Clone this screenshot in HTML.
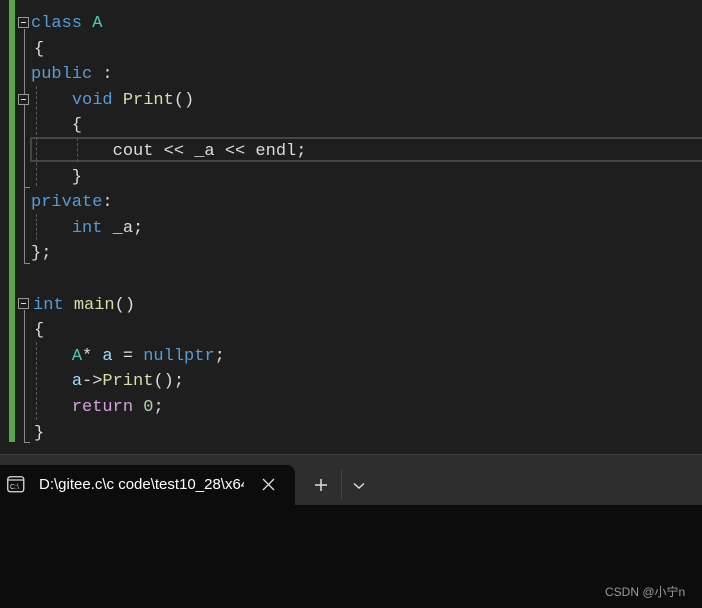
<!DOCTYPE html>
<html><head><meta charset="utf-8"><style>
*{margin:0;padding:0;box-sizing:border-box}
body{width:702px;height:608px;background:#0c0c0c;position:relative;overflow:hidden;font-family:"Liberation Mono",monospace}
#ed{position:absolute;left:0;top:0;width:702px;height:454px;background:#1e1e1e}
.gb{position:absolute;left:9px;width:6px;background:#57a64a}
.ln{position:absolute;left:31px;height:25.6px;line-height:25.6px;font-size:17px;color:#dcdcdc;white-space:pre}
.k{color:#569cd6}.t{color:#4ec9b0}.f{color:#dcdcaa}.v{color:#9cdcfe}.r{color:#d8a0df}.n{color:#b5cea8}
.box{position:absolute;left:18px;width:11px;height:11px;border:1px solid #999;background:#1e1e1e}
.box:after{content:"";position:absolute;left:2px;top:4px;width:5px;height:1px;background:#ddd}
.vl{position:absolute;width:1px;background:#888}
.hl{position:absolute;height:1px;background:#888}
.dg{position:absolute;width:0;border-left:1px dashed #5a5a5a}
</style></head><body>
<div id="ed">
<div class="gb" style="top:0;height:442px"></div>
<div style="position:absolute;left:30px;top:137px;width:680px;height:25px;border:2px solid #464646"></div>

<div class="vl" style="left:24px;top:29px;height:158px"></div>
<div class="hl" style="left:24px;top:187px;width:6px"></div>
<div class="vl" style="left:24px;top:187px;height:76px"></div>
<div class="hl" style="left:24px;top:263px;width:6px"></div>
<div class="vl" style="left:24px;top:310px;height:132px"></div>
<div class="hl" style="left:24px;top:442px;width:6px"></div>
<div class="dg" style="left:36px;top:86px;height:100px"></div>
<div class="dg" style="left:36px;top:214px;height:26px"></div>
<div class="dg" style="left:36px;top:342px;height:78px"></div>
<div class="dg" style="left:77px;top:138px;height:24px"></div>
<div class="box" style="top:17px"></div>
<div class="box" style="top:94px"></div>
<div class="box" style="top:298px"></div>

<div class="ln" style="top:11px"><span class="k">class</span> <span class="t">A</span></div>
<div class="ln" style="top:36.6px;left:34px">{</div>
<div class="ln" style="top:62.2px"><span class="k">public</span> :</div>
<div class="ln" style="top:87.8px">    <span class="k">void</span> <span class="f">Print</span>()</div>
<div class="ln" style="top:113.4px">    {</div>
<div class="ln" style="top:139px">        cout &lt;&lt; _a &lt;&lt; endl;</div>
<div class="ln" style="top:164.6px">    }</div>
<div class="ln" style="top:190.2px"><span class="k">private</span>:</div>
<div class="ln" style="top:215.8px">    <span class="k">int</span> _a;</div>
<div class="ln" style="top:241.4px">};</div>
<div class="ln" style="top:292.6px;left:33px"><span class="k">int</span> <span class="f">main</span>()</div>
<div class="ln" style="top:318.2px;left:34px">{</div>
<div class="ln" style="top:343.8px">    <span class="t">A</span>* <span class="v">a</span> = <span class="k">nullptr</span>;</div>
<div class="ln" style="top:369.4px">    <span class="v">a</span>-&gt;<span class="f">Print</span>();</div>
<div class="ln" style="top:395px">    <span class="r">return</span> <span class="n">0</span>;</div>
<div class="ln" style="top:420.6px;left:34px">}</div>
</div>
<div style="position:absolute;left:0;top:454px;width:702px;height:1px;background:#3c3c3c"></div>
<div style="position:absolute;left:0;top:455px;width:702px;height:50px;background:#2e2e2e"></div>
<div style="position:absolute;left:0;top:465px;width:295px;height:143px;background:#0c0c0c;border-top-right-radius:8px"></div>
<div style="position:absolute;left:295px;top:505px;width:407px;height:103px;background:#0c0c0c"></div>
<svg style="position:absolute;left:7px;top:476px" width="18" height="17" viewBox="0 0 18 17"><rect x="0.75" y="0.75" width="16" height="15" rx="2.5" fill="none" stroke="#ddd" stroke-width="1.3"/><line x1="1" y1="4" x2="17" y2="4" stroke="#ddd" stroke-width="1.2"/><text x="3" y="13" font-size="7" fill="#ddd" font-family="Liberation Sans,sans-serif">C:\</text></svg>
<div style="position:absolute;left:39px;top:475px;width:205px;overflow:hidden;white-space:nowrap;font-family:'Liberation Sans',sans-serif;font-size:15px;color:#fff;line-height:20px">D:\gitee.c\c code\test10_28\x64</div>
<svg style="position:absolute;left:262px;top:478px" width="13" height="13"><path d="M1 1L12 12M12 1L1 12" stroke="#ddd" stroke-width="1.3"/></svg>
<svg style="position:absolute;left:314px;top:478px" width="14" height="14"><path d="M7 1V13M1 7H13" stroke="#ddd" stroke-width="1.5"/></svg>
<div style="position:absolute;left:341px;top:470px;width:1px;height:30px;background:#444"></div>
<svg style="position:absolute;left:353px;top:482px" width="12" height="8"><path d="M1 1.5L6 6L11 1.5" stroke="#ddd" stroke-width="1.4" fill="none"/></svg>
<div style="position:absolute;left:605px;top:583px;font-family:'Liberation Sans','Noto Sans CJK SC',sans-serif;font-size:12px;color:#9a9a9a">CSDN @小宁n</div>
</body></html>
